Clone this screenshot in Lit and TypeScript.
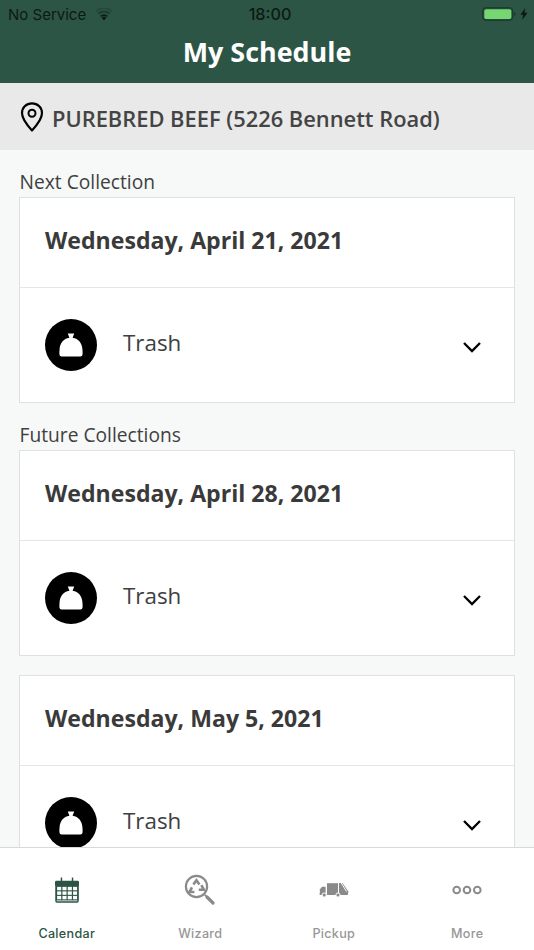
import { LitElement, html, css, svg } from "lit";
import { customElement } from "lit/decorators.js";

const bag = html`<svg class="bag" viewBox="0 0 52 52" width="52" height="52" aria-hidden="true">
  <circle cx="26" cy="26" r="26" fill="#000"/>
  <path fill="#fff" d="M22.8 14.6H29.2L27.6 18.8C33.6 19.6 37 24.4 37.4 30C37.6 32.5 37.7 34 37.5 35.6C37.4 36.8 36.6 37.6 35.4 37.6H16.6C15.4 37.6 14.6 36.8 14.5 35.6C14.3 34 14.4 32.5 14.6 30C15 24.4 18.4 19.6 24.4 18.8Z"/>
</svg>`;

const chevron = html`<svg class="chev" viewBox="0 0 20 12" width="20" height="12" aria-hidden="true">
  <path d="M2 2l8 8 8-8" fill="none" stroke="#000" stroke-width="2.3" stroke-linejoin="miter"/>
</svg>`;

const gridLines = [0, 1, 2, 3, 4].map((i) => svg`<rect x="${1 + i * 5.75}" y="8" width="1.3" height="17" />`);
const gridRows = [0, 1, 2, 3].map((i) => svg`<rect x="1" y="${9.4 + i * 4.9}" width="24" height="1.2" />`);

const calIcon = html`<svg viewBox="0 0 26 28" width="24" height="26" aria-hidden="true" fill="#2d5545">
  <path d="M1.5 4h23A1.5 1.5 0 0 1 26 5.5V9H0V5.5A1.5 1.5 0 0 1 1.5 4z"/>
  <rect x="6.2" y="0.5" width="1.6" height="6"/><rect x="18.2" y="0.5" width="1.6" height="6"/>
  <path d="M1 9h24v17a1 1 0 0 1-1 1H2a1 1 0 0 1-1-1z" fill="none" stroke="#2d5545" stroke-width="1.4"/>
  ${gridLines}${gridRows}
</svg>`;

const wizIcon = html`<svg viewBox="0 0 32 32" width="32" height="32" aria-hidden="true">
  <circle cx="12.5" cy="12.5" r="10.6" fill="none" stroke="#8a8a8a" stroke-width="2.2"/>
  <path d="M20.6 20.6l2 2" stroke="#8a8a8a" stroke-width="1.6"/>
  <path d="M23 23l6 6" stroke="#8a8a8a" stroke-width="3.2" stroke-linecap="round"/>
  <g fill="none" stroke="#8a8a8a" stroke-width="2.6">
    <path d="M9.4 10.6l3-4.4 3 4.4"/>
    <path d="M17.4 11.2l2.4 4.6h-5"/>
    <path d="M10.4 18H5.4l2.6-4.6"/>
  </g>
</svg>`;

const truckIcon = html`<svg viewBox="0 0 30 15" width="30" height="15" aria-hidden="true" fill="#8a8a8a">
  <path d="M1 7.2l2-2.5h3.6v8.3H.6z"/>
  <rect x="8" y="1.2" width="11" height="11.8"/>
  <path d="M20 1h3.4l6 8.6-.6 3.4H20z"/>
  <path d="M22.2 1l5.4 8.6" stroke="#fff" stroke-width="1"/>
  <circle cx="5.2" cy="13" r="2.1" stroke="#fff" stroke-width="1"/>
  <circle cx="19" cy="13" r="2.1" stroke="#fff" stroke-width="1"/>
</svg>`;

const moreIcon = html`<svg viewBox="0 0 30 10" width="30" height="10" aria-hidden="true">
  <g fill="none" stroke="#8a8a8a" stroke-width="2">
    <circle cx="4.7" cy="5" r="3.3"/><circle cx="15" cy="5" r="3.3"/><circle cx="25.3" cy="5" r="3.3"/>
  </g>
</svg>`;

@customElement("app-root")
export class AppRoot extends LitElement {
  static styles = css`
    :host {
      display: flex;
      flex-direction: column;
      width: 534px;
      height: 950px;
      overflow: hidden;
      background: #f7f9f8;
      font-family: "Open Sans", sans-serif;
      color: #3a3a3a;
    }
    .top {
      flex: none;
      height: 83px;
      box-sizing: border-box;
      background: #2d5545;
      display: flex;
      flex-direction: column;
    }
    .status {
      height: 28px;
      padding: 0 6px 0 8px;
      display: grid;
      grid-template-columns: 1fr auto 1fr;
      align-items: center;
      color: #0b1a14;
      font-family: Inter, "Liberation Sans", sans-serif;
      font-size: 15px;
    }
    .s-left { display: flex; align-items: center; gap: 9px; }
    .s-right { display: flex; align-items: center; justify-content: flex-end; gap: 4px; margin-top: -1px; }
    .time { font-weight: 500; font-size: 16.2px; padding-left: 4px; }
    .title {
      flex: 1;
      display: flex;
      align-items: center;
      justify-content: center;
      padding-bottom: 8px;
      color: #fff;
      font-size: 26.9px;
      font-weight: 700;
    }
    .loc {
      flex: none;
      height: 67px;
      box-sizing: border-box;
      background: #e9e9e9;
      display: flex;
      align-items: center;
      gap: 8px;
      padding: 4px 0 0 20px;
      font-size: 21.87px;
      font-weight: 600;
      color: #444;
      white-space: nowrap;
    }
    .loc svg { margin-top: -4px; }
    .content {
      flex: 1;
      min-height: 0;
      overflow: hidden;
      padding: 0 19px;
      display: flex;
      flex-direction: column;
    }
    .label {
      height: 47px;
      flex: none;
      box-sizing: border-box;
      display: flex;
      align-items: flex-end;
      padding: 0 0 2px 0.6px;
      font-size: 19.2px;
      color: #404040;
    }
    .card {
      flex: none;
      height: 206px;
      box-sizing: border-box;
      background: #fff;
      border: 1px solid #dfe1e0;
      display: flex;
      flex-direction: column;
    }
    .card.gap { margin-top: 19px; }
    .date {
      height: 90px;
      flex: none;
      box-sizing: border-box;
      border-bottom: 1px solid #e6e6e6;
      display: flex;
      align-items: center;
      padding: 0 25px 6px;
      font-size: 23.1px;
      font-weight: 700;
      color: #3a3a3a;
    }
    .row {
      flex: 1;
      display: flex;
      align-items: center;
      padding: 0 32px 0 25px;
      font-size: 22.4px;
      color: #404040;
    }
    .row span { margin-left: 26px; flex: 1; padding-bottom: 5px; }
    .chev { margin-top: 3px; }
    .bag { display: block; flex: none; }
    .tabs {
      flex: none;
      height: 103px;
      box-sizing: border-box;
      background: #fff;
      border-top: 1px solid #d9d9d9;
      display: grid;
      grid-template-columns: repeat(4, 1fr);
    }
    .tab {
      display: grid;
      grid-template-rows: 53px auto;
      justify-items: center;
      align-items: center;
      font-family: Inter, "Liberation Sans", sans-serif;
      font-size: 12.6px;
      font-weight: 500;
      letter-spacing: 0.3px;
      color: #979797;
    }
    .tab svg { display: block; margin-top: 32px; align-self: start; }
    .tab.cal { color: #2d5545; }
    .tab.cal svg { margin-top: 29px; }
    .tab.wiz svg { margin-top: 26px; }
    .tab.trk svg { margin-top: 34px; }
    .tab.mor svg { margin-top: 37px; }
    .tab span { margin-top: 16px; }
  `;

  private card(date: string, gap = false) {
    return html`<div class="card ${gap ? "gap" : ""}">
      <div class="date">${date}</div>
      <div class="row">${bag}<span>Trash</span>${chevron}</div>
    </div>`;
  }

  render() {
    return html`
      <div class="top">
        <div class="status">
          <div class="s-left">
            <span>No Service</span>
            <svg viewBox="0 0 18 13" width="18" height="13" aria-hidden="true">
              <path d="M9 12.5l-2.4-3a3.8 3.8 0 0 1 4.8 0z" fill="#0b1a14"/>
              <path d="M5.2 7.8a5.9 5.9 0 0 1 7.6 0l-1 1.2a4.4 4.4 0 0 0-5.6 0z" fill="#0b1a14"/>
              <path d="M2.6 4.8a10 10 0 0 1 12.8 0l-1.6 1.7a7.5 7.5 0 0 0-9.6 0z" fill="#1e3d31"/>
              <path d="M.4 2.5a13 13 0 0 1 17.2 0l-1.4 1.5a11 11 0 0 0-14.4 0z" fill="#25493b"/>
            </svg>
          </div>
          <span class="time">18:00</span>
          <div class="s-right">
            <svg viewBox="0 0 34 14" width="34" height="14" aria-hidden="true">
              <rect x="0.75" y="0.75" width="30" height="12.5" rx="3.5" fill="none" stroke="#1e3d31" stroke-width="1.5"/>
              <rect x="2.3" y="2.3" width="27" height="9.7" rx="1.8" fill="#76d672"/>
              <path d="M32 5c1 .4 1.7 1 1.7 2s-.7 1.6-1.7 2z" fill="#1e3d31"/>
            </svg>
            <svg viewBox="0 0 9 13" width="8" height="12" aria-hidden="true">
              <path d="M5.8 0L.4 7.3h3L2.6 13l6-7.8H5.2z" fill="#0b1a14"/>
            </svg>
          </div>
        </div>
        <div class="title">My Schedule</div>
      </div>
      <div class="loc">
        <svg viewBox="0 0 24 30" width="24" height="30" aria-hidden="true">
          <path d="M12 1.4C6 1.4 2 5.8 2 11c0 5.6 4.6 11.6 10 17.4C17.4 22.6 22 16.6 22 11c0-5.2-4-9.6-10-9.6z" fill="none" stroke="#000" stroke-width="2.2" stroke-linejoin="round"/>
          <circle cx="12" cy="11.2" r="3.5" fill="none" stroke="#000" stroke-width="2"/>
        </svg>
        PUREBRED BEEF (5226 Bennett Road)
      </div>
      <div class="content">
        <div class="label">Next Collection</div>
        ${this.card("Wednesday, April 21, 2021")}
        <div class="label">Future Collections</div>
        ${this.card("Wednesday, April 28, 2021")}
        ${this.card("Wednesday, May 5, 2021", true)}
      </div>
      <div class="tabs">
        <div class="tab cal">${calIcon}<span>Calendar</span></div>
        <div class="tab wiz">${wizIcon}<span>Wizard</span></div>
        <div class="tab trk">${truckIcon}<span>Pickup</span></div>
        <div class="tab mor">${moreIcon}<span>More</span></div>
      </div>
    `;
  }
}
